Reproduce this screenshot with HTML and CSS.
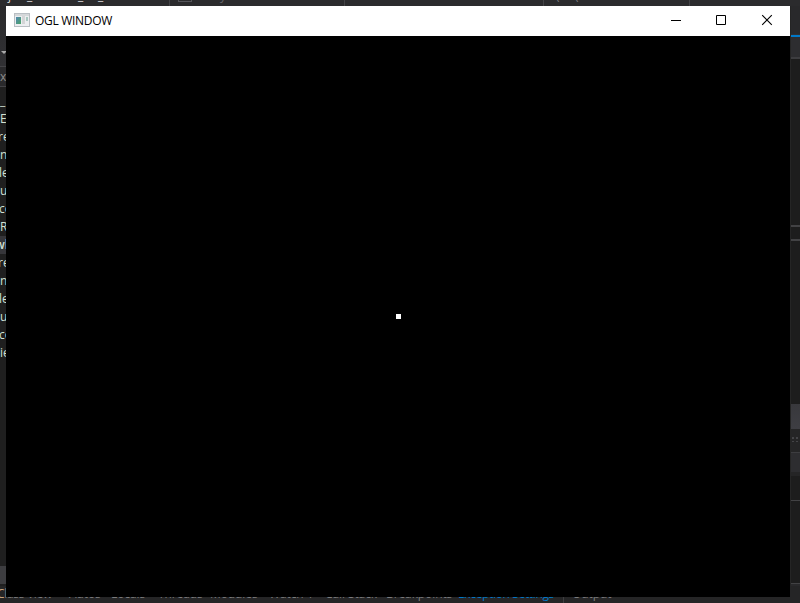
FILE: index.html
```
<!DOCTYPE html>
<html lang="en">
<head>
<meta charset="utf-8">
<title>OGL WINDOW</title>
<link rel="stylesheet" href="styles.css">
</head>
<body>
<div class="ide">
  <div class="scope-bar">
    <div class="scope first"><span class="j">j</span><span class="u1">_</span><span class="u2">_</span><span>_</span></div><div class="scope second"><i class="box"></i><span>y</span></div><div class="scope third"></div><div class="scope fourth"><span>(</span><span>(</span></div>
  </div>
  <div class="middle">
    <div class="editor">
      <div class="toolbar"><i class="caret"></i></div>
      <div class="ext">x</div>
      <div class="lines">
        <div>_</div><div>E</div><div class="cut">re</div><div>n</div><div class="shift">le</div><div>u</div><div class="shift">co</div><div>R</div><div class="current">wl</div><div class="cut">re</div><div>n</div><div class="shift">le</div><div>u</div><div class="shift">co</div><div>ie</div>
      </div>
      <div class="status"></div>
    </div>
    <div class="side">
      <div class="head"></div>
      <div class="accent"></div>
      <div class="tabs"></div>
      <div class="pane one"></div>
      <div class="pane two"></div>
      <div class="pane three"></div>
      <div class="caption"></div>
      <div class="grip"></div>
      <div class="tools"></div>
      <div class="pane four"></div>
      <div class="pane five"></div>
      <div class="foot"></div>
    </div>
  </div>
  <div class="dock">
    <span class="tab view">Class View</span><span class="tab autos">Autos</span><span class="tab locals">Locals</span><span class="tab threads">Threads</span><span class="tab modules">Modules</span><span class="tab watch">Watch 1</span><span class="tab stack">Call Stack</span><span class="tab breaks">Breakpoints</span><span class="tab link">Exception Settings</span><span class="tab output">Output</span>
  </div>
</div>
<main class="window">
  <header class="titlebar">
    <svg class="app-icon" width="16" height="14" viewBox="0 0 16 14" shape-rendering="crispEdges">
      <defs><linearGradient id="g" x1="0" y1="0" x2="1" y2="1"><stop offset="0" stop-color="#5387b1"/><stop offset="1" stop-color="#4ca568"/></linearGradient></defs>
      <path fill="#b9bec3" d="M0 0h16v14H0z"/><path fill="#eceef0" d="M1 1h14v12H1z"/><path fill="#d5d8da" d="M1 1h14v2H1z"/>
      <path fill="url(#g)" d="M2 4h5v7H2z"/><path fill="#d4d5d6" d="M8 3h3v8H8z"/><path fill="#a9c8c0" d="M12 4h2v4h-2z"/>
    </svg>
    <h1>OGL WINDOW</h1>
    <div class="controls">
      <svg width="45" height="30" viewBox="0 0 45 30"><path d="M16 14.5h10" stroke="#000"/></svg>
      <svg width="45" height="30" viewBox="0 0 45 30"><path d="M16.5 9.5h9v9h-9z" fill="none" stroke="#000"/></svg>
      <svg width="45" height="30" viewBox="0 0 45 30"><path d="M17.2 9.2l9.6 9.6M26.8 9.2l-9.6 9.6" stroke="#000" stroke-width="1.1"/></svg>
    </div>
  </header>
  <div class="canvas"><i class="point"></i></div>
</main>
</body>
</html>
```
FILE: styles.css
```
* { box-sizing: border-box; }
body { margin: 0; width: 800px; height: 603px; overflow: hidden; position: relative; background: #252526; }
.ide { width: 800px; height: 603px; display: flex; flex-direction: column; overflow: hidden; font: 12px/18px "Open Sans", "Noto Sans", sans-serif; color: #d0e0d4; }
.scope-bar { height: 6px; flex: none; display: flex; background: #2b2b2d; overflow: hidden; }
.scope { border-right: 1px solid #434346; height: 6px; overflow: hidden; display: flex; }
.scope span { display: block; margin-top: -13px; width: 12px; flex: none; }
.first { width: 170px; padding-left: 8px; color: #dcdcdc; }
.first .j { width: 19px; }
.first .u1 { width: 51px; }
.first .u2 { width: 20px; }
.second { width: 175px; padding-left: 178px; padding-left: 8px; color: #66666a; }
.box { width: 14px; height: 2px; margin-right: 28px; border: 1px solid #55555a; border-top: 0; }
.third { width: 199px; }
.fourth { width: 146px; padding-left: 12px; color: #77777a; }
.fourth span { width: 19px; }
.middle { height: 580px; flex: none; display: flex; justify-content: space-between; }
.editor { width: 6px; overflow: hidden; background: #1f1f1f; white-space: nowrap; display: flex; flex-direction: column; }
.toolbar { height: 61px; flex: none; background: linear-gradient(#29292b, #303033); padding-top: 45px; border-bottom: 1px solid #434346; }
.caret { display: block; width: 0; border: 3px solid transparent; border-top-color: #aaa; border-bottom: 0; margin-left: 1px; }
.ext { height: 20px; flex: none; color: #8c8c8c; border-bottom: 1px solid #434346; background: #29292b; line-height: 19px; }
.lines { height: 479px; flex: none; padding-top: 5px; }
.lines div { height: 18px; }
.lines .cut { text-indent: -2px; }
.lines .shift { text-indent: -1px; }
.lines .current { background: #36363a; text-indent: -5px; font-weight: 600; }
.status { height: 18px; background: #3d3d40; }
.side { width: 10px; border-left: 1px solid #252525; display: flex; flex-direction: column; background: #1d1d1d; }
.side div { flex-shrink: 0; }
.head { height: 29px; background: #29292b; border-bottom: 1px solid #303033; }
.accent { height: 2px; background: #0078c8; }
.tabs { height: 22px; background: #2d2d30; border-bottom: 2px solid #3d3d40; }
.pane { border-bottom: 2px solid #424244; }
.one { height: 168px; }
.two { height: 14px; }
.three { height: 163px; border-bottom: 0; }
.caption { height: 25px; background: linear-gradient(#38383c, #3e3e43); }
.grip { height: 23px; background: radial-gradient(circle, #454548 0.7px, #252526 1px) 0 0 / 4px 4px; border-top: 7px solid #252526; border-bottom: 10px solid #252526; }
.tools { height: 24px; background: #2d2d30; border-top: 1px solid #3d3d40; border-bottom: 4px solid #252526; }
.four { height: 25px; border-bottom-width: 1px; }
.five { height: 83px; border-bottom-width: 1px; }
.foot { flex: 1; background: #29292b; }
.dock { height: 17px; flex: none; display: grid; grid-template-columns: 72px 42px 47px 52px 59px 56px 61px 70px 107px 1fr; margin-left: -3px; width: 803px; white-space: nowrap; color: #7c7c7e; background: #252526; line-height: 16px; }
.tab { height: 17px; letter-spacing: -0.1px; }
.view { letter-spacing: -0.3px; }
.view::first-letter { color: #c9a37c; }
.link { color: #0078c8; padding-left: 2px; letter-spacing: -0.35px; }
.output { border-left: 1px solid #3e3e40; padding-left: 8px; }
.window { position: absolute; left: 6px; top: 6px; width: 784px; height: 591px; display: flex; flex-direction: column; background: #000; }
.titlebar { height: 30px; flex: none; display: flex; background: #fff; padding-left: 8px; }
.app-icon { margin-top: 7px; flex: none; }
h1 { margin: 0 0 0 5px; font: 12px/29px "Open Sans", "Noto Sans", sans-serif; color: #000; letter-spacing: -0.3px; }
.controls { margin-left: auto; display: flex; }
.controls svg { display: block; }
.canvas { flex: 1; display: grid; place-items: center; }
.point { width: 5px; height: 5px; background: #fff; }
```
